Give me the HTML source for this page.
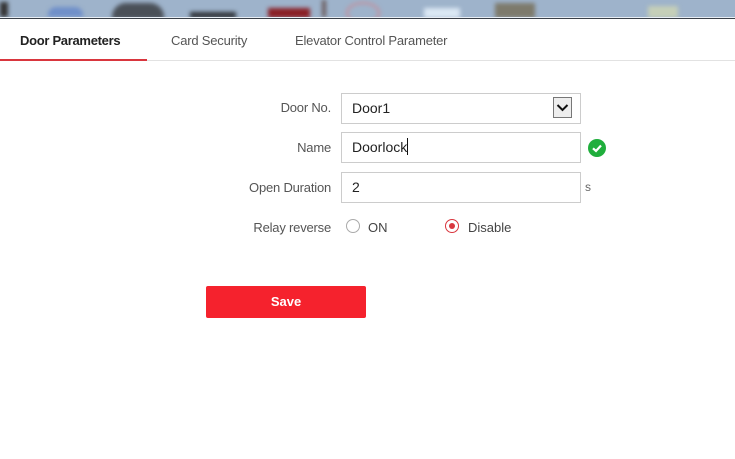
<!DOCTYPE html>
<html><head><style>
body{margin:0;width:735px;height:459px;background:#fff;font-family:"Liberation Sans",sans-serif;position:relative;overflow:hidden;color:#333}
.a{position:absolute}
.lbl{position:absolute;font-size:13px;color:#555;text-align:right;width:150px;left:181px;letter-spacing:-0.2px}
.inp{position:absolute;left:341px;width:240px;height:31px;border:1px solid #ccc;box-sizing:border-box;font-size:14px;color:#222;padding-left:10px;line-height:29px}
.blur{filter:blur(2px)}
</style></head><body>
<div class="a" style="left:0;top:0;width:735px;height:17px;background:#9eb3cb;overflow:hidden">
<div class="a blur" style="left:0;top:2px;width:8px;height:15px;background:#333"></div>
<div class="a blur" style="left:48px;top:7px;width:35px;height:10px;background:#6f8fc9;border-radius:8px 8px 0 0"></div>
<div class="a blur" style="left:112px;top:3px;width:52px;height:16px;background:#4a5058;border-radius:14px 14px 0 0"></div>
<div class="a blur" style="left:190px;top:12px;width:46px;height:6px;background:#2e3238"></div>
<div class="a blur" style="left:268px;top:8px;width:42px;height:10px;background:#8a2026"></div>
<div class="a blur" style="left:322px;top:0;width:4px;height:17px;background:#6a5a5a"></div>
<div class="a blur" style="left:346px;top:2px;width:34px;height:22px;border:2px solid #c98b96;border-radius:50%;box-sizing:border-box"></div>
<div class="a blur" style="left:424px;top:8px;width:36px;height:10px;background:#dbe8f4"></div>
<div class="a blur" style="left:495px;top:3px;width:40px;height:15px;background:#7d7a6c"></div>
<div class="a blur" style="left:648px;top:6px;width:30px;height:12px;background:#c5cfb8"></div>
</div>
<div class="a" style="left:0;top:17px;width:735px;height:1px;background:#e8eef5"></div>
<div class="a" style="left:0;top:18px;width:735px;height:1px;background:#3a4048"></div>

<div class="a" style="left:20px;top:33px;font-size:13px;font-weight:bold;color:#222;letter-spacing:-0.3px">Door Parameters</div>
<div class="a" style="left:171px;top:33px;font-size:13px;color:#555;letter-spacing:-0.2px">Card Security</div>
<div class="a" style="left:295px;top:33px;font-size:13px;color:#555;letter-spacing:-0.2px">Elevator Control Parameter</div>
<div class="a" style="left:0;top:60px;width:735px;height:1px;background:#e2e2e2"></div>
<div class="a" style="left:0;top:59px;width:147px;height:2px;background:#d9363e"></div>

<div class="lbl" style="top:100px">Door No.</div>
<div class="inp" style="top:93px">Door1</div>
<div class="a" style="left:553px;top:97px;width:19px;height:21px;border:1px solid #777;background:#eee;box-sizing:border-box">
<svg width="17" height="19" viewBox="0 0 17 19"><path d="M3.5 7 L8.5 12 L13.5 7" fill="none" stroke="#111" stroke-width="2"/></svg></div>

<div class="lbl" style="top:140px">Name</div>
<div class="inp" style="top:132px">Doorlock<span style="display:inline-block;width:1px;height:17px;background:#111;vertical-align:-3px"></span></div>
<svg class="a" style="left:588px;top:139px" width="18" height="18" viewBox="0 0 18 18"><circle cx="9" cy="9" r="9" fill="#1fae3c"/><path d="M5 9.3 L8 12 L13 6.5" fill="none" stroke="#fff" stroke-width="2.2"/></svg>

<div class="lbl" style="top:180px">Open Duration</div>
<div class="inp" style="top:172px">2</div>
<div class="a" style="left:585px;top:180px;font-size:12px;color:#666">s</div>

<div class="lbl" style="top:220px">Relay reverse</div>
<div class="a" style="left:346px;top:219px;width:14px;height:14px;border:1px solid #aaa;border-radius:50%;box-sizing:border-box"></div>
<div class="a" style="left:368px;top:220px;font-size:13px;color:#444">ON</div>
<div class="a" style="left:445px;top:219px;width:14px;height:14px;border:1px solid #d9363e;border-radius:50%;box-sizing:border-box"><div style="margin:3px;width:6px;height:6px;background:#d9363e;border-radius:50%"></div></div>
<div class="a" style="left:468px;top:220px;font-size:13px;color:#444">Disable</div>

<div class="a" style="left:206px;top:286px;width:160px;height:32px;background:#f5222d;border-radius:2px;color:#fff;font-size:13px;font-weight:bold;text-align:center;line-height:31px">Save</div>
</body></html>
